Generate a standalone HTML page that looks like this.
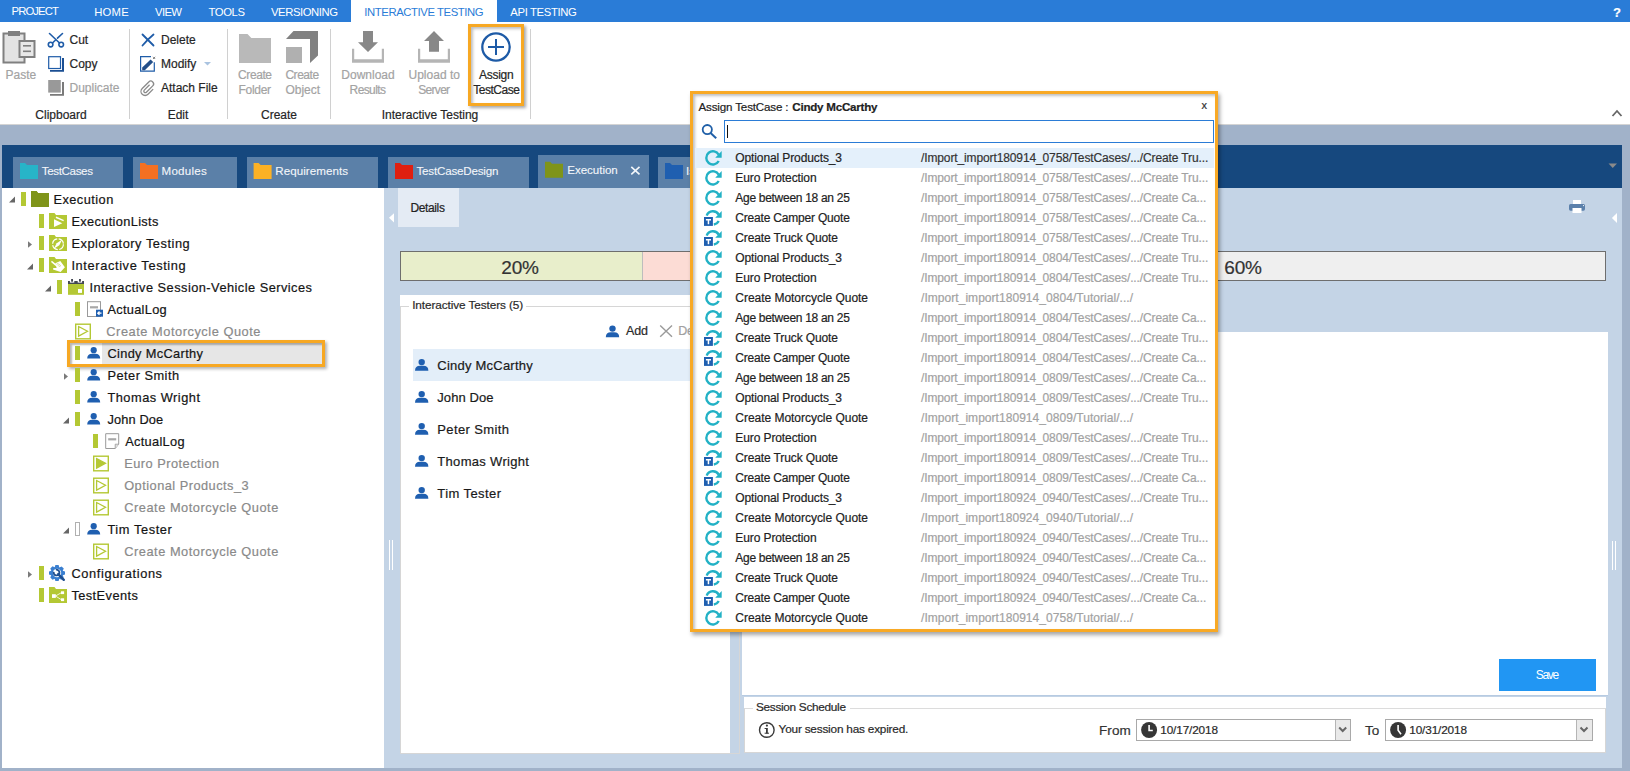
<!DOCTYPE html>
<html><head><meta charset="utf-8"><style>
*{margin:0;padding:0;box-sizing:border-box}
html,body{width:1630px;height:771px;overflow:hidden;background:#a1b2c9;font-family:"Liberation Sans",sans-serif;color:#1e1e1e}
.a{position:absolute}
.t{position:absolute;white-space:nowrap;line-height:1;-webkit-text-stroke:0.2px currentColor}
svg{position:absolute;overflow:visible}
</style></head><body>
<div class="a" style="left:0px;top:0px;width:1630px;height:22px;background:#2a7cd7"></div>
<div class="a" style="left:351px;top:0px;width:146px;height:22px;background:#fff"></div>
<div class="t" style="left:11.5px;top:6.43px;font-size:11.3px;color:#fff;letter-spacing:-0.903px;-webkit-text-stroke:0">PROJECT</div>
<div class="t" style="left:94.2px;top:7.23px;font-size:11.3px;color:#fff;letter-spacing:0.242px;-webkit-text-stroke:0">HOME</div>
<div class="t" style="left:155px;top:7.23px;font-size:11.3px;color:#fff;letter-spacing:-0.620px;-webkit-text-stroke:0">VIEW</div>
<div class="t" style="left:208.5px;top:7.23px;font-size:11.3px;color:#fff;letter-spacing:-0.395px;-webkit-text-stroke:0">TOOLS</div>
<div class="t" style="left:271px;top:7.23px;font-size:11.3px;color:#fff;letter-spacing:-0.434px;-webkit-text-stroke:0">VERSIONING</div>
<div class="t" style="left:364.3px;top:7.23px;font-size:11.3px;color:#2a7cd7;letter-spacing:-0.404px;-webkit-text-stroke:0">INTERACTIVE TESTING</div>
<div class="t" style="left:510.3px;top:7.23px;font-size:11.3px;color:#fff;letter-spacing:-0.359px;-webkit-text-stroke:0">API TESTING</div>
<div class="t" style="left:1613px;top:5.50px;font-size:13px;color:#fff;font-weight:bold">?</div>
<div class="a" style="left:0px;top:22px;width:1630px;height:103px;background:#fff"></div>
<div class="a" style="left:0px;top:124px;width:1630px;height:1px;background:#d4d4d4"></div>
<svg style="left:0;top:0" width="1630" height="771" viewBox="0 0 1630 771"><rect x="3.5" y="33.5" width="21" height="29" fill="#e3e3e3" stroke="#808080" stroke-width="2"/>
<rect x="8" y="31" width="12" height="5" fill="#808080"/>
<rect x="19.5" y="41" width="15" height="16" fill="#e8e8e8" stroke="#808080" stroke-width="2"/>
<rect x="23" y="45" width="8" height="1.6" fill="#808080"/><rect x="23" y="50.5" width="8" height="1.6" fill="#808080"/></svg>
<div class="t" style="left:5.5px;top:68.84px;font-size:12px;color:#a3a3a3;">Paste</div>
<svg style="left:0;top:0" width="1630" height="771" viewBox="0 0 1630 771"><g stroke="#1f5ca8" stroke-width="1.6" fill="none" stroke-linecap="round">
<line x1="49.5" y1="33.5" x2="59" y2="42.5"/><line x1="62.5" y1="33.5" x2="57.5" y2="38.2"/><line x1="55.3" y1="40.2" x2="53" y2="42.5"/>
<circle cx="50.6" cy="44.6" r="2.3"/><circle cx="61.2" cy="44.6" r="2.3"/></g></svg>
<div class="t" style="left:69.5px;top:33.84px;font-size:12px;color:#262626;">Cut</div>
<svg style="left:0;top:0" width="1630" height="771" viewBox="0 0 1630 771"><rect x="48.7" y="56.7" width="11.8" height="11.8" fill="none" stroke="#1f5ca8" stroke-width="1.2"/>
<path d="M62 58 H64 V71.8 H50 V70 H62 Z" fill="#1b4f93"/></svg>
<div class="t" style="left:69.5px;top:57.84px;font-size:12px;color:#262626;">Copy</div>
<svg style="left:0;top:0" width="1630" height="771" viewBox="0 0 1630 771"><rect x="48.2" y="80" width="12.6" height="12.6" fill="#999"/>
<path d="M62 82 H64 V95.8 H50 V94 H62 Z" fill="#7a7a7a"/></svg>
<div class="t" style="left:69.5px;top:81.84px;font-size:12px;color:#a3a3a3;">Duplicate</div>
<div class="a" style="left:129px;top:29px;width:1px;height:90px;background:#d0d0d0"></div>
<svg style="left:0;top:0" width="1630" height="771" viewBox="0 0 1630 771"><g stroke="#1f5ca8" stroke-width="1.8" fill="none" stroke-linecap="round">
<path d="M142.5 34.5 Q147 39 153.5 45.5"/><path d="M153.5 34.5 Q148 39 142.5 45.5"/></g></svg>
<div class="t" style="left:161px;top:33.84px;font-size:12px;color:#262626;">Delete</div>
<svg style="left:0;top:0" width="1630" height="771" viewBox="0 0 1630 771"><path d="M151 56.7 H140.6 V71.2 H154.3 V62.2" fill="none" stroke="#1f5ca8" stroke-width="1.2"/>
<path d="M142.2 67.6 L150.6 59.4 L153.2 62 L144.8 70.2 L142.2 70.2 Z" fill="#234e88"/>
<path d="M153 56.8 L155.2 59 M155.2 56.8 L153 59" stroke="#777" stroke-width="0.9"/></svg>
<div class="t" style="left:161px;top:57.84px;font-size:12px;color:#262626;">Modify</div>
<svg style="left:0;top:0" width="1630" height="771" viewBox="0 0 1630 771"><path d="M204 62 H211 L207.5 65.5 Z" fill="#aac3e0"/></svg>
<svg style="left:0;top:0" width="1630" height="771" viewBox="0 0 1630 771"><g transform="translate(148.5,88) rotate(45)"><path d="M-1.5 -3 V4.5 A1.5 1.5 0 0 0 1.5 4.5 V-4.5 A2.8 2.8 0 0 0 -4.1 -4.5 V4.8 A4.1 4.1 0 0 0 4.1 4.8 V-2.5" fill="none" stroke="#8a8a8a" stroke-width="1.3"/></g></svg>
<div class="t" style="left:161px;top:81.84px;font-size:12px;color:#262626;">Attach File</div>
<div class="a" style="left:227px;top:29px;width:1px;height:90px;background:#d0d0d0"></div>
<svg style="left:0;top:0" width="1630" height="771" viewBox="0 0 1630 771"><path d="M239 34 H247.5 L251.3 38 H271 V63 H239 Z" fill="#b9b9b9"/></svg>
<div class="t" style="left:238.1px;top:68.84px;font-size:12px;color:#a3a3a3;letter-spacing:-0.423px;">Create</div>
<div class="t" style="left:238.6px;top:84.14px;font-size:12px;color:#a3a3a3;letter-spacing:-0.323px;">Folder</div>
<svg style="left:0;top:0" width="1630" height="771" viewBox="0 0 1630 771"><path d="M293.5 31 H318 V55.4 L310 63 V39 H286 Z" fill="#818181"/><rect x="286" y="47" width="16" height="16" fill="#b0b0b0"/></svg>
<div class="t" style="left:285.4px;top:68.84px;font-size:12px;color:#a3a3a3;letter-spacing:-0.463px;">Create</div>
<div class="t" style="left:285.4px;top:84.14px;font-size:12px;color:#a3a3a3;letter-spacing:0.006px;">Object</div>
<div class="a" style="left:330px;top:29px;width:1px;height:90px;background:#d0d0d0"></div>
<svg style="left:0;top:0" width="1630" height="771" viewBox="0 0 1630 771"><path d="M363 31 H373 V42.2 H378 L368 52 L358 42.2 H363 Z" fill="#888"/>
<path d="M352 48.8 H354.2 V59.2 H381.8 V48.8 H384 V62.8 H352 Z" fill="#b5b5b5"/></svg>
<div class="t" style="left:341.3px;top:68.84px;font-size:12px;color:#a3a3a3;letter-spacing:0.004px;">Download</div>
<div class="t" style="left:349.6px;top:84.14px;font-size:12px;color:#a3a3a3;letter-spacing:-0.619px;">Results</div>
<svg style="left:0;top:0" width="1630" height="771" viewBox="0 0 1630 771"><path d="M434 31 L444 41 H439 V51.8 H429 V41 H424 Z" fill="#888"/>
<path d="M418 48.8 H420.2 V59.2 H447.8 V48.8 H450 V62.8 H418 Z" fill="#b5b5b5"/></svg>
<div class="t" style="left:408.5px;top:68.84px;font-size:12px;color:#a3a3a3;letter-spacing:0.005px;">Upload to</div>
<div class="t" style="left:418.3px;top:84.14px;font-size:12px;color:#a3a3a3;letter-spacing:-0.709px;">Server</div>
<div class="a" style="left:468.3px;top:24.3px;width:55.7px;height:81.5px;border:3px solid #f7a823;box-shadow:2px 2px 3px rgba(0,0,0,.35), inset 2px 2px 3px rgba(0,0,0,.25)"></div>
<svg style="left:0;top:0" width="1630" height="771" viewBox="0 0 1630 771"><circle cx="496" cy="47" r="13.7" fill="none" stroke="#1d5aa6" stroke-width="2.3"/>
<rect x="488" y="46" width="16" height="2" fill="#1d5aa6"/><rect x="495" y="39" width="2" height="16" fill="#1d5aa6"/></svg>
<div class="t" style="left:479.1px;top:68.84px;font-size:12px;color:#262626;letter-spacing:-0.303px;">Assign</div>
<div class="t" style="left:473.2px;top:84.14px;font-size:12px;color:#262626;letter-spacing:-0.474px;">TestCase</div>
<div class="a" style="left:530px;top:29px;width:1px;height:90px;background:#d0d0d0"></div>
<div class="t" style="left:-139px;width:400px;text-align:center;top:109.14px;font-size:12px;color:#262626;">Clipboard</div>
<div class="t" style="left:-22px;width:400px;text-align:center;top:109.14px;font-size:12px;color:#262626;">Edit</div>
<div class="t" style="left:79px;width:400px;text-align:center;top:109.14px;font-size:12px;color:#262626;">Create</div>
<div class="t" style="left:230px;width:400px;text-align:center;top:109.14px;font-size:12px;color:#262626;">Interactive Testing</div>
<svg style="left:0;top:0" width="1630" height="771" viewBox="0 0 1630 771"><path d="M1612.5 116 L1617 111 L1621.5 116" fill="none" stroke="#666" stroke-width="1.8"/></svg>
<div class="a" style="left:2px;top:145px;width:1620px;height:43px;background:#16487e"></div>
<div class="a" style="left:2px;top:188px;width:382px;height:580px;background:#fff"></div>
<div class="a" style="left:384px;top:188px;width:1238px;height:580px;background:#c4d4e6"></div>
<div class="a" style="left:13px;top:157px;width:110px;height:31px;background:#5b80a8"></div>
<svg style="left:0;top:0" width="1630" height="771" viewBox="0 0 1630 771"><path d="M20 163 H25 L27 165 H38 V179 H20 Z" fill="#27b4c8"/></svg>
<div class="t" style="left:41.8px;top:165.48px;font-size:11.6px;color:#f3f6fa;letter-spacing:-0.368px;-webkit-text-stroke:0.1px currentColor">TestCases</div>
<div class="a" style="left:133px;top:157px;width:104px;height:31px;background:#5b80a8"></div>
<svg style="left:0;top:0" width="1630" height="771" viewBox="0 0 1630 771"><path d="M140 163 H145 L147 165 H158 V179 H140 Z" fill="#f37022"/></svg>
<div class="t" style="left:161.5px;top:165.48px;font-size:11.6px;color:#f3f6fa;letter-spacing:0.259px;-webkit-text-stroke:0.1px currentColor">Modules</div>
<div class="a" style="left:246.6px;top:157px;width:131.4px;height:31px;background:#5b80a8"></div>
<svg style="left:0;top:0" width="1630" height="771" viewBox="0 0 1630 771"><path d="M253.6 163 H258.6 L260.6 165 H271.6 V179 H253.6 Z" fill="#fcb125"/></svg>
<div class="t" style="left:275.3px;top:165.48px;font-size:11.6px;color:#f3f6fa;letter-spacing:0.045px;-webkit-text-stroke:0.1px currentColor">Requirements</div>
<div class="a" style="left:388px;top:157px;width:140.70000000000005px;height:31px;background:#5b80a8"></div>
<svg style="left:0;top:0" width="1630" height="771" viewBox="0 0 1630 771"><path d="M395 163 H400 L402 165 H413 V179 H395 Z" fill="#df1f10"/></svg>
<div class="t" style="left:416.5px;top:165.48px;font-size:11.6px;color:#f3f6fa;letter-spacing:-0.189px;-webkit-text-stroke:0.1px currentColor">TestCaseDesign</div>
<div class="a" style="left:538px;top:154.8px;width:111px;height:33.19999999999999px;background:#5b80a8"></div>
<svg style="left:0;top:0" width="1630" height="771" viewBox="0 0 1630 771"><path d="M545 161.8 H550 L552 163.8 H563 V177.8 H545 Z" fill="#7f9419"/></svg>
<div class="t" style="left:567.3px;top:164.48px;font-size:11.6px;color:#f3f6fa;letter-spacing:-0.055px;-webkit-text-stroke:0.1px currentColor">Execution</div>
<div class="a" style="left:658px;top:157px;width:102px;height:31px;background:#5b80a8"></div>
<svg style="left:0;top:0" width="1630" height="771" viewBox="0 0 1630 771"><path d="M665 163 H670 L672 165 H683 V179 H665 Z" fill="#1f5fb0"/></svg>
<div class="t" style="left:686px;top:165.48px;font-size:11.6px;color:#f3f6fa;letter-spacing:0.097px;-webkit-text-stroke:0.1px currentColor">Issues</div>
<svg style="left:0;top:0" width="1630" height="771" viewBox="0 0 1630 771"><path d="M631.3 166.8 L639.5 174.3 M639.5 166.8 L631.3 174.3" stroke="#f3f6fa" stroke-width="1.6"/></svg>
<svg style="left:0;top:0" width="1630" height="771" viewBox="0 0 1630 771"><path d="M1608.5 163.5 H1617 L1612.75 168 Z" fill="#8a8a8a"/></svg>
<svg style="left:0;top:0" width="1630" height="771" viewBox="0 0 1630 771"><path d="M9 202.5 H15 V196.5 Z" fill="#666"/></svg>
<div class="a" style="left:21px;top:192px;width:5px;height:14px;background:#b4c834"></div>
<svg style="left:0;top:0" width="1630" height="771" viewBox="0 0 1630 771"><path d="M31 191 H36.5 L38 193 H49 V207 H31 Z" fill="#7f9419"/></svg>
<svg style="left:0;top:0" width="1630" height="771" viewBox="0 0 1630 771"><path d="M31 191 H36.5 L38 193 H49 V207 H31 Z" fill="#7f9419"/></svg>
<div class="t" style="left:53.4px;top:194.16px;font-size:12.8px;color:#141414;letter-spacing:0.464px;">Execution</div>
<div class="a" style="left:39px;top:214px;width:5px;height:14px;background:#b4c834"></div>
<svg style="left:0;top:0" width="1630" height="771" viewBox="0 0 1630 771"><path d="M49 213 H54.5 L56 215 H67 V229 H49 Z" fill="#b4c834"/></svg>
<svg style="left:0;top:0" width="1630" height="771" viewBox="0 0 1630 771"><path d="M54 219.3 L62.3 223.2 L54 227 Z" fill="#fff"/><path d="M56.2 216.6 L63.9 220 L63.4 221.2 L55.7 217.9 Z" fill="#fff"/></svg>
<div class="t" style="left:71.4px;top:216.16px;font-size:12.8px;color:#141414;letter-spacing:0.345px;">ExecutionLists</div>
<svg style="left:0;top:0" width="1630" height="771" viewBox="0 0 1630 771"><path d="M28 241.3 L32 244.5 L28 247.7 Z" fill="#7a7a7a"/></svg>
<div class="a" style="left:39px;top:236px;width:5px;height:14px;background:#b4c834"></div>
<svg style="left:0;top:0" width="1630" height="771" viewBox="0 0 1630 771"><path d="M49 235 H54.5 L56 237 H67 V251 H49 Z" fill="#b4c834"/></svg>
<svg style="left:0;top:0" width="1630" height="771" viewBox="0 0 1630 771"><circle cx="58" cy="244.2" r="5.4" fill="none" stroke="#fff" stroke-width="1.2" stroke-dasharray="7 1.5"/><path d="M62.2 239.6 L59.3 245.2 L53.8 248.8 L56.7 243.2 Z" fill="#fff"/></svg>
<div class="t" style="left:71.4px;top:238.16px;font-size:12.8px;color:#141414;letter-spacing:0.540px;">Exploratory Testing</div>
<svg style="left:0;top:0" width="1630" height="771" viewBox="0 0 1630 771"><path d="M27 269.5 H33 V263.5 Z" fill="#666"/></svg>
<div class="a" style="left:39px;top:258px;width:5px;height:14px;background:#b4c834"></div>
<svg style="left:0;top:0" width="1630" height="771" viewBox="0 0 1630 771"><path d="M49 257 H54.5 L56 259 H67 V273 H49 Z" fill="#b4c834"/></svg>
<svg style="left:0;top:0" width="1630" height="771" viewBox="0 0 1630 771"><path d="M51 261.9 L51.9 260.7 L57.4 265.3 L56.4 266.6 Z" fill="#fff"/><path d="M55.3 263.3 L60.3 260.9 L64.9 267.3 L60.6 272 L53 269.4 L53.3 268.1 L56.6 268 L56 265.6 Z" fill="#fff"/><path d="M56.6 264.2 L58.5 263.4 M57.8 265.4 L59.8 264.4 M58.8 266.6 L61 265.5" stroke="#b4c834" stroke-width="0.6"/></svg>
<div class="t" style="left:71.4px;top:260.16px;font-size:12.8px;color:#141414;letter-spacing:0.633px;">Interactive Testing</div>
<svg style="left:0;top:0" width="1630" height="771" viewBox="0 0 1630 771"><path d="M45 291.5 H51 V285.5 Z" fill="#666"/></svg>
<div class="a" style="left:57px;top:280px;width:5px;height:14px;background:#b4c834"></div>
<svg style="left:0;top:0" width="1630" height="771" viewBox="0 0 1630 771"><rect x="68" y="283.8" width="16" height="11" fill="#b4c834"/><rect x="68" y="282.6" width="16" height="1.4" fill="#434853"/><rect x="68" y="281" width="1.9" height="2" fill="#434853"/><rect x="74.3" y="281" width="3.4" height="2" fill="#434853"/><rect x="82.1" y="281" width="1.9" height="2" fill="#434853"/><rect x="71.1" y="279" width="1.9" height="2.7" fill="#434853"/><rect x="79" y="279" width="1.9" height="2.7" fill="#434853"/><rect x="78" y="289" width="4" height="3.9" fill="#fff"/></svg>
<div class="t" style="left:89.4px;top:282.16px;font-size:12.8px;color:#141414;letter-spacing:0.466px;">Interactive Session-Vehicle Services</div>
<div class="a" style="left:75px;top:302px;width:5px;height:14px;background:#b4c834"></div>
<svg style="left:0;top:0" width="1630" height="771" viewBox="0 0 1630 771"><rect x="87.5" y="301.7" width="13" height="14.8" fill="#fff" stroke="#9a9a9a" stroke-width="1"/><rect x="90" y="306.2" width="8" height="2.2" fill="#a8a8a8"/><rect x="96" y="309.7" width="7" height="7" fill="#1f5fb0"/><path d="M101.5 313.2 H98 M99.5 311.5 L97.8 313.2 L99.5 314.9" stroke="#fff" stroke-width="1.3" fill="none"/></svg>
<div class="t" style="left:107.4px;top:304.16px;font-size:12.8px;color:#141414;letter-spacing:0.301px;">ActualLog</div>
<svg style="left:0;top:0" width="1630" height="771" viewBox="0 0 1630 771"><rect x="75.7" y="324.2" width="14.6" height="14.6" fill="none" stroke="#b4c834" stroke-width="1.4"/><path d="M78.6 326.5 L87.5 331.3 L78.6 336.1 Z" fill="none" stroke="#b4c834" stroke-width="1.3" stroke-linejoin="miter"/></svg>
<div class="t" style="left:106.3px;top:326.16px;font-size:12.8px;color:#8a8a8a;letter-spacing:0.539px;">Create Motorcycle Quote</div>
<div class="a" style="left:67.1px;top:340px;width:258.2px;height:26.8px;border:3px solid #f7a823;box-shadow:2px 2px 3px rgba(0,0,0,.3), inset 2px 2px 2px rgba(0,0,0,.28);background:linear-gradient(to right,#fff 32px,#e6e6e6 32px)"></div>
<div class="a" style="left:75px;top:346px;width:5px;height:14px;background:#b4c834"></div>
<svg style="left:0;top:0" width="1630" height="771" viewBox="0 0 1630 771"><g transform="translate(87.2,353) scale(1.0)"><circle cx="6.5" cy="-2.8" r="3.1" fill="#1f5fb0"/><path d="M0 5.6 Q0 0.8 5 0.8 H8 Q13 0.8 13 5.6 Z" fill="#1f5fb0"/></g></svg>
<div class="t" style="left:107.4px;top:348.16px;font-size:12.8px;color:#141414;letter-spacing:0.345px;">Cindy McCarthy</div>
<svg style="left:0;top:0" width="1630" height="771" viewBox="0 0 1630 771"><path d="M64 373.3 L68 376.5 L64 379.7 Z" fill="#7a7a7a"/></svg>
<div class="a" style="left:75px;top:368px;width:5px;height:14px;background:#b4c834"></div>
<svg style="left:0;top:0" width="1630" height="771" viewBox="0 0 1630 771"><g transform="translate(87.2,375) scale(1.0)"><circle cx="6.5" cy="-2.8" r="3.1" fill="#1f5fb0"/><path d="M0 5.6 Q0 0.8 5 0.8 H8 Q13 0.8 13 5.6 Z" fill="#1f5fb0"/></g></svg>
<div class="t" style="left:107.4px;top:370.16px;font-size:12.8px;color:#141414;letter-spacing:0.486px;">Peter Smith</div>
<div class="a" style="left:75px;top:390px;width:5px;height:14px;background:#b4c834"></div>
<svg style="left:0;top:0" width="1630" height="771" viewBox="0 0 1630 771"><g transform="translate(87.2,397) scale(1.0)"><circle cx="6.5" cy="-2.8" r="3.1" fill="#1f5fb0"/><path d="M0 5.6 Q0 0.8 5 0.8 H8 Q13 0.8 13 5.6 Z" fill="#1f5fb0"/></g></svg>
<div class="t" style="left:107.4px;top:392.16px;font-size:12.8px;color:#141414;letter-spacing:0.508px;">Thomas Wright</div>
<svg style="left:0;top:0" width="1630" height="771" viewBox="0 0 1630 771"><path d="M63 423.5 H69 V417.5 Z" fill="#666"/></svg>
<div class="a" style="left:75px;top:412px;width:5px;height:14px;background:#b4c834"></div>
<svg style="left:0;top:0" width="1630" height="771" viewBox="0 0 1630 771"><g transform="translate(87.2,419) scale(1.0)"><circle cx="6.5" cy="-2.8" r="3.1" fill="#1f5fb0"/><path d="M0 5.6 Q0 0.8 5 0.8 H8 Q13 0.8 13 5.6 Z" fill="#1f5fb0"/></g></svg>
<div class="t" style="left:107.4px;top:414.16px;font-size:12.8px;color:#141414;letter-spacing:0.150px;">John Doe</div>
<div class="a" style="left:93.3px;top:434px;width:5px;height:14px;background:#b4c834"></div>
<svg style="left:0;top:0" width="1630" height="771" viewBox="0 0 1630 771"><path d="M105.7 433.7 H118.7 V444.2 L115.2 448.5 H105.7 Z" fill="#fff" stroke="#9a9a9a" stroke-width="1"/><path d="M118.7 444.2 H115.2 V448.5" fill="#e0e0e0" stroke="#9a9a9a" stroke-width="0.8"/><rect x="108.2" y="438.2" width="8" height="2.2" fill="#a8a8a8"/></svg>
<div class="t" style="left:125.2px;top:436.16px;font-size:12.8px;color:#141414;letter-spacing:0.301px;">ActualLog</div>
<svg style="left:0;top:0" width="1630" height="771" viewBox="0 0 1630 771"><rect x="93.7" y="456.2" width="14.6" height="14.6" fill="none" stroke="#b4c834" stroke-width="1.4"/><path d="M96.6 458.5 L105.5 463.3 L96.6 468.1 Z" fill="#b4c834" stroke="#b4c834" stroke-width="1.3" stroke-linejoin="miter"/></svg>
<div class="t" style="left:124.2px;top:458.16px;font-size:12.8px;color:#8a8a8a;letter-spacing:0.479px;">Euro Protection</div>
<svg style="left:0;top:0" width="1630" height="771" viewBox="0 0 1630 771"><rect x="93.7" y="478.2" width="14.6" height="14.6" fill="none" stroke="#b4c834" stroke-width="1.4"/><path d="M96.6 480.5 L105.5 485.3 L96.6 490.1 Z" fill="none" stroke="#b4c834" stroke-width="1.3" stroke-linejoin="miter"/></svg>
<div class="t" style="left:124.2px;top:480.16px;font-size:12.8px;color:#8a8a8a;letter-spacing:0.471px;">Optional Products_3</div>
<svg style="left:0;top:0" width="1630" height="771" viewBox="0 0 1630 771"><rect x="93.7" y="500.2" width="14.6" height="14.6" fill="none" stroke="#b4c834" stroke-width="1.4"/><path d="M96.6 502.5 L105.5 507.3 L96.6 512.1 Z" fill="none" stroke="#b4c834" stroke-width="1.3" stroke-linejoin="miter"/></svg>
<div class="t" style="left:124.2px;top:502.16px;font-size:12.8px;color:#8a8a8a;letter-spacing:0.539px;">Create Motorcycle Quote</div>
<svg style="left:0;top:0" width="1630" height="771" viewBox="0 0 1630 771"><path d="M63 533.5 H69 V527.5 Z" fill="#666"/></svg>
<svg style="left:0;top:0" width="1630" height="771" viewBox="0 0 1630 771"><rect x="75.5" y="522.5" width="4" height="13" fill="none" stroke="#b0b0b0" stroke-width="1"/></svg>
<svg style="left:0;top:0" width="1630" height="771" viewBox="0 0 1630 771"><g transform="translate(87.2,529) scale(1.0)"><circle cx="6.5" cy="-2.8" r="3.1" fill="#1f5fb0"/><path d="M0 5.6 Q0 0.8 5 0.8 H8 Q13 0.8 13 5.6 Z" fill="#1f5fb0"/></g></svg>
<div class="t" style="left:107.4px;top:524.16px;font-size:12.8px;color:#141414;letter-spacing:0.598px;">Tim Tester</div>
<svg style="left:0;top:0" width="1630" height="771" viewBox="0 0 1630 771"><rect x="93.7" y="544.2" width="14.6" height="14.6" fill="none" stroke="#b4c834" stroke-width="1.4"/><path d="M96.6 546.5 L105.5 551.3 L96.6 556.1 Z" fill="none" stroke="#b4c834" stroke-width="1.3" stroke-linejoin="miter"/></svg>
<div class="t" style="left:124.2px;top:546.16px;font-size:12.8px;color:#8a8a8a;letter-spacing:0.539px;">Create Motorcycle Quote</div>
<svg style="left:0;top:0" width="1630" height="771" viewBox="0 0 1630 771"><path d="M28 571.3 L32 574.5 L28 577.7 Z" fill="#7a7a7a"/></svg>
<div class="a" style="left:39px;top:566px;width:5px;height:14px;background:#b4c834"></div>
<svg style="left:0;top:0" width="1630" height="771" viewBox="0 0 1630 771"><g transform="translate(57,573)"><path d="M-1.6 -7.9 H1.6 L2.3 -5.6 L4.6 -6.6 L6.8 -4.4 L5.7 -2.2 L8 -1.5 V1.6 L5.7 2.3 L6.7 4.5 L4.5 6.7 L2.3 5.7 L1.6 8 H-1.6 L-2.3 5.7 L-4.5 6.7 L-6.7 4.5 L-5.7 2.3 L-8 1.6 V-1.6 L-5.7 -2.3 L-6.7 -4.5 L-4.5 -6.7 L-2.3 -5.7 Z" fill="#3a7fd0"/><circle cx="0" cy="0" r="4.2" fill="#fff"/><path d="M-3.3 -1.2 A2.9 2.9 0 1 0 -1.2 -3.3" fill="none" stroke="#1f4f8f" stroke-width="1.9"/><path d="M1.2 1.2 L6.8 6.8" stroke="#1f4f8f" stroke-width="2.4" stroke-linecap="round"/></g></svg>
<div class="t" style="left:71.4px;top:568.16px;font-size:12.8px;color:#141414;letter-spacing:0.624px;">Configurations</div>
<div class="a" style="left:39px;top:588px;width:5px;height:14px;background:#b4c834"></div>
<svg style="left:0;top:0" width="1630" height="771" viewBox="0 0 1630 771"><path d="M49 587 H54.5 L56 589 H67 V603 H49 Z" fill="#b4c834"/></svg>
<svg style="left:0;top:0" width="1630" height="771" viewBox="0 0 1630 771"><rect x="52" y="594.2" width="3.8" height="3.7" fill="#fff"/><rect x="61" y="591.3" width="3.1" height="2.8" fill="#fff"/><rect x="61" y="598.3" width="3.1" height="2.8" fill="#fff"/><path d="M55.5 596 L61.2 592.8 M55.5 596 L61.2 599.6" stroke="#fff" stroke-width="0.8"/></svg>
<div class="t" style="left:71.4px;top:590.16px;font-size:12.8px;color:#141414;letter-spacing:0.434px;">TestEvents</div>
<div class="a" style="left:389px;top:540px;width:1px;height:30px;background:#fff"></div>
<div class="a" style="left:392px;top:540px;width:1px;height:30px;background:#fff"></div>
<svg style="left:0;top:0" width="1630" height="771" viewBox="0 0 1630 771"><path d="M389 217.8 L394 213.2 V222.6 Z" fill="#fff"/></svg>
<div class="a" style="left:398px;top:188px;width:61px;height:38.8px;background:#e4ebf4"></div>
<div class="t" style="left:410.5px;top:201.84px;font-size:12px;color:#222;letter-spacing:-0.381px;">Details</div>
<svg style="left:0;top:0" width="1630" height="771" viewBox="0 0 1630 771"><rect x="1573" y="200" width="8" height="4" fill="#fff"/><rect x="1569" y="204" width="16" height="6.7" rx="1.6" fill="#5b80ab"/><rect x="1572.5" y="208" width="9" height="5" fill="#fff"/><circle cx="1583.5" cy="205.6" r="0.6" fill="#fff"/></svg>
<svg style="left:0;top:0" width="1630" height="771" viewBox="0 0 1630 771"><path d="M1611.9 218 L1617 213.1 V223 Z" fill="#fff"/></svg>
<div class="a" style="left:400px;top:251.2px;width:1206px;height:29.4px;border:1px solid #6e6e6e;background:#efefef"></div>
<div class="a" style="left:401px;top:252.2px;width:240.5px;height:27.4px;background:#e8eecb"></div>
<div class="a" style="left:641.5px;top:252.2px;width:240.5px;height:27.4px;background:#fcdcd5;border-left:1px solid #bdbdbd"></div>
<div class="t" style="left:320px;width:400px;text-align:center;top:257.62px;font-size:19px;color:#333;letter-spacing:-0.2px">20%</div>
<div class="t" style="left:562px;width:400px;text-align:center;top:257.62px;font-size:19px;color:#333;letter-spacing:-0.2px">20%</div>
<div class="t" style="left:1043px;width:400px;text-align:center;top:257.62px;font-size:19px;color:#333;letter-spacing:-0.2px">60%</div>
<div class="a" style="left:400px;top:294.6px;width:330px;height:458.6px;background:#fff"></div>
<div class="a" style="left:400px;top:306px;width:340px;height:448px;border:1px solid #d6d6d6"></div>
<div class="a" style="left:409px;top:300px;width:117px;height:12px;background:#fff"></div>
<div class="t" style="left:412.2px;top:300.01px;font-size:11.8px;color:#2a2a2a;letter-spacing:-0.102px;">Interactive Testers (5)</div>
<svg style="left:0;top:0" width="1630" height="771" viewBox="0 0 1630 771"><g transform="translate(605.8,331.5) scale(1.03)"><circle cx="6.5" cy="-2.8" r="3.1" fill="#1f5fb0"/><path d="M0 5.6 Q0 0.8 5 0.8 H8 Q13 0.8 13 5.6 Z" fill="#1f5fb0"/></g></svg>
<div class="t" style="left:626px;top:325.42px;font-size:12.5px;color:#2a2a2a;letter-spacing:-0.2px">Add</div>
<svg style="left:0;top:0" width="1630" height="771" viewBox="0 0 1630 771"><path d="M660.2 325.5 L672 336.8 M672 325.5 L660.2 336.8" stroke="#9a9a9a" stroke-width="1.4"/></svg>
<div class="t" style="left:678.2px;top:325.42px;font-size:12.5px;color:#a0a0a0;letter-spacing:-0.2px">Delete</div>
<div class="a" style="left:412.8px;top:348.8px;width:317.2px;height:32.2px;background:#e3eef9"></div>
<svg style="left:0;top:0" width="1630" height="771" viewBox="0 0 1630 771"><g transform="translate(415,365) scale(1.03)"><circle cx="6.5" cy="-2.8" r="3.1" fill="#1f5fb0"/><path d="M0 5.6 Q0 0.8 5 0.8 H8 Q13 0.8 13 5.6 Z" fill="#1f5fb0"/></g></svg>
<div class="t" style="left:437.3px;top:358.50px;font-size:13px;color:#1a1a1a;letter-spacing:0.224px;">Cindy McCarthy</div>
<svg style="left:0;top:0" width="1630" height="771" viewBox="0 0 1630 771"><g transform="translate(415,397) scale(1.03)"><circle cx="6.5" cy="-2.8" r="3.1" fill="#1f5fb0"/><path d="M0 5.6 Q0 0.8 5 0.8 H8 Q13 0.8 13 5.6 Z" fill="#1f5fb0"/></g></svg>
<div class="t" style="left:437.3px;top:390.50px;font-size:13px;color:#1a1a1a;letter-spacing:0.075px;">John Doe</div>
<svg style="left:0;top:0" width="1630" height="771" viewBox="0 0 1630 771"><g transform="translate(415,429) scale(1.03)"><circle cx="6.5" cy="-2.8" r="3.1" fill="#1f5fb0"/><path d="M0 5.6 Q0 0.8 5 0.8 H8 Q13 0.8 13 5.6 Z" fill="#1f5fb0"/></g></svg>
<div class="t" style="left:437.3px;top:422.50px;font-size:13px;color:#1a1a1a;letter-spacing:0.378px;">Peter Smith</div>
<svg style="left:0;top:0" width="1630" height="771" viewBox="0 0 1630 771"><g transform="translate(415,461) scale(1.03)"><circle cx="6.5" cy="-2.8" r="3.1" fill="#1f5fb0"/><path d="M0 5.6 Q0 0.8 5 0.8 H8 Q13 0.8 13 5.6 Z" fill="#1f5fb0"/></g></svg>
<div class="t" style="left:437.3px;top:454.50px;font-size:13px;color:#1a1a1a;letter-spacing:0.316px;">Thomas Wright</div>
<svg style="left:0;top:0" width="1630" height="771" viewBox="0 0 1630 771"><g transform="translate(415,493) scale(1.03)"><circle cx="6.5" cy="-2.8" r="3.1" fill="#1f5fb0"/><path d="M0 5.6 Q0 0.8 5 0.8 H8 Q13 0.8 13 5.6 Z" fill="#1f5fb0"/></g></svg>
<div class="t" style="left:437.3px;top:486.50px;font-size:13px;color:#1a1a1a;letter-spacing:0.416px;">Tim Tester</div>
<div class="a" style="left:742px;top:332px;width:866px;height:363px;background:#fff"></div>
<div class="a" style="left:742px;top:694.8px;width:866px;height:1px;background:#b7cbe2"></div>
<div class="a" style="left:1499px;top:659px;width:96.5px;height:31.6px;background:#2196f3"></div>
<div class="t" style="left:1535.7px;top:668.84px;font-size:12px;color:#fff;letter-spacing:-1.281px;-webkit-text-stroke:0">Save</div>
<div class="a" style="left:744.2px;top:697.3px;width:861.8px;height:55.8px;background:#fff"></div>
<div class="a" style="left:744px;top:708px;width:861.6px;height:45.3px;border:1px solid #d6d6d6;border-top-color:#dcdcdc"></div>
<div class="a" style="left:752.5px;top:701px;width:97px;height:12px;background:#fff"></div>
<div class="t" style="left:756px;top:702.01px;font-size:11.8px;color:#2a2a2a;letter-spacing:-0.300px;">Session Schedule</div>
<svg style="left:0;top:0" width="1630" height="771" viewBox="0 0 1630 771"><circle cx="766.8" cy="730" r="7.3" fill="none" stroke="#3a3a3a" stroke-width="1.4"/><rect x="766" y="728" width="1.8" height="5.5" fill="#3a3a3a"/><circle cx="766.9" cy="725.6" r="1.1" fill="#3a3a3a"/><rect x="764.6" y="732.7" width="4.4" height="1" fill="#3a3a3a"/><rect x="764.6" y="728" width="2.5" height="1" fill="#3a3a3a"/></svg>
<div class="t" style="left:778.6px;top:724.01px;font-size:11.8px;color:#2a2a2a;letter-spacing:-0.206px;">Your session has expired.</div>
<div class="t" style="left:1099px;top:723.57px;font-size:13.5px;color:#333;letter-spacing:0.1px">From</div>
<div class="t" style="left:1365px;top:723.57px;font-size:13.5px;color:#333;letter-spacing:0.1px">To</div>
<div class="a" style="left:1136.3px;top:719.3px;width:214.29999999999995px;height:22px;border:1px solid #a9a9a9;background:#fff"></div>
<div class="a" style="left:1334.7px;top:720.3px;width:14.899999999999864px;height:20px;background:#e9e9e9;border-left:1px solid #b5b5b5"></div>
<svg style="left:0;top:0" width="1630" height="771" viewBox="0 0 1630 771"><path d="M1339.2 727.5 L1342.7 731 L1346.2 727.5" fill="none" stroke="#666" stroke-width="2"/></svg>
<svg style="left:0;top:0" width="1630" height="771" viewBox="0 0 1630 771"><circle cx="1149.1" cy="730" r="8" fill="#363636"/><path d="M1149.1 725 V730.5 H1152.8" fill="none" stroke="#fff" stroke-width="1.6"/></svg>
<div class="t" style="left:1160.3px;top:725.01px;font-size:11.8px;color:#2a2a2a;letter-spacing:-0.15px">10/17/2018</div>
<div class="a" style="left:1385.3px;top:719.3px;width:207.5px;height:22px;border:1px solid #a9a9a9;background:#fff"></div>
<div class="a" style="left:1576px;top:720.3px;width:15.799999999999955px;height:20px;background:#e9e9e9;border-left:1px solid #b5b5b5"></div>
<svg style="left:0;top:0" width="1630" height="771" viewBox="0 0 1630 771"><path d="M1580.5 727.5 L1584 731 L1587.5 727.5" fill="none" stroke="#666" stroke-width="2"/></svg>
<svg style="left:0;top:0" width="1630" height="771" viewBox="0 0 1630 771"><circle cx="1398.1" cy="730" r="8" fill="#363636"/><path d="M1398.1 725 V730.3 L1401 734.2" fill="none" stroke="#fff" stroke-width="1.6"/></svg>
<div class="t" style="left:1409.3px;top:725.01px;font-size:11.8px;color:#2a2a2a;letter-spacing:-0.15px">10/31/2018</div>
<div class="a" style="left:1612px;top:540.5px;width:1px;height:29px;background:#fff"></div>
<div class="a" style="left:1615px;top:540.5px;width:1px;height:29px;background:#fff"></div>
<div class="a" style="left:690.2px;top:91.2px;width:528px;height:541.3px;background:#fff;border:3px solid #f8a925;box-shadow:2px 3px 4px rgba(0,0,0,.35), inset 2px 2px 3px rgba(0,0,0,.25)"></div>
<div class="t" style="left:698.5px;top:101.18px;font-size:11.6px;color:#222;letter-spacing:-0.157px;">Assign TestCase :</div>
<div class="t" style="left:792.3px;top:101.18px;font-size:11.6px;color:#222;letter-spacing:-0.236px;font-weight:bold;">Cindy McCarthy</div>
<div class="t" style="left:1201.5px;top:99.89px;font-size:11px;color:#333;">x</div>
<svg style="left:0;top:0" width="1630" height="771" viewBox="0 0 1630 771"><circle cx="707.3" cy="129.6" r="4.6" fill="none" stroke="#2060a8" stroke-width="1.8"/><path d="M710.6 133 L716.2 138.3" stroke="#2060a8" stroke-width="2"/></svg>
<div class="a" style="left:724.2px;top:120.4px;width:490px;height:22.3px;border:1.4px solid #2b7cd6;background:#fff"></div>
<div class="a" style="left:727.4px;top:125px;width:1px;height:12.5px;background:#111"></div>
<div class="a" style="left:694.6px;top:148px;width:519.4px;height:19.8px;background:#e4f0fb"></div>
<svg style="left:0;top:0" width="1630" height="771" viewBox="0 0 1630 771"><path d="M718.73 154.80 A6.6 6.6 0 1 0 718.73 161.00" fill="none" stroke="#22b1c5" stroke-width="2.4"/><path d="M721.70 151.10 V157.70 H715.20 Z" fill="#22b1c5"/></svg>
<div class="t" style="left:735.3px;top:151.84px;font-size:12px;color:#222;letter-spacing:-0.111px;">Optional Products_3</div>
<div class="t" style="left:921px;top:151.84px;font-size:12px;color:#333;letter-spacing:-0.12px">/Import_import180914_0758/TestCases/.../Create Tru...</div>
<svg style="left:0;top:0" width="1630" height="771" viewBox="0 0 1630 771"><path d="M718.73 174.80 A6.6 6.6 0 1 0 718.73 181.00" fill="none" stroke="#22b1c5" stroke-width="2.4"/><path d="M721.70 171.10 V177.70 H715.20 Z" fill="#22b1c5"/></svg>
<div class="t" style="left:735.3px;top:171.84px;font-size:12px;color:#222;letter-spacing:-0.099px;">Euro Protection</div>
<div class="t" style="left:921px;top:171.84px;font-size:12px;color:#a2a2a2;letter-spacing:-0.12px">/Import_import180914_0758/TestCases/.../Create Tru...</div>
<svg style="left:0;top:0" width="1630" height="771" viewBox="0 0 1630 771"><path d="M718.73 194.80 A6.6 6.6 0 1 0 718.73 201.00" fill="none" stroke="#22b1c5" stroke-width="2.4"/><path d="M721.70 191.10 V197.70 H715.20 Z" fill="#22b1c5"/></svg>
<div class="t" style="left:735.3px;top:191.84px;font-size:12px;color:#222;letter-spacing:-0.292px;">Age between 18 an 25</div>
<div class="t" style="left:921px;top:191.84px;font-size:12px;color:#a2a2a2;letter-spacing:-0.12px">/Import_import180914_0758/TestCases/.../Create Ca...</div>
<svg style="left:0;top:0" width="1630" height="771" viewBox="0 0 1630 771"><path d="M718.73 214.80 A6.6 6.6 0 0 0 706.70 215.64" fill="none" stroke="#22b1c5" stroke-width="2.4"/><path d="M713.82 224.44 A6.6 6.6 0 0 0 718.73 221.00" fill="none" stroke="#22b1c5" stroke-width="2.4"/><path d="M721.70 211.10 V217.70 H715.20 Z" fill="#22b1c5"/><rect x="704" y="217.00" width="8.9" height="8.9" fill="#1f5fb0"/><path d="M705.9 219.70 H711 M708.45 219.70 V224.20" stroke="#fff" stroke-width="1.5"/></svg>
<div class="t" style="left:735.3px;top:211.84px;font-size:12px;color:#222;letter-spacing:-0.196px;">Create Camper Quote</div>
<div class="t" style="left:921px;top:211.84px;font-size:12px;color:#a2a2a2;letter-spacing:-0.12px">/Import_import180914_0758/TestCases/.../Create Ca...</div>
<svg style="left:0;top:0" width="1630" height="771" viewBox="0 0 1630 771"><path d="M718.73 234.80 A6.6 6.6 0 0 0 706.70 235.64" fill="none" stroke="#22b1c5" stroke-width="2.4"/><path d="M713.82 244.44 A6.6 6.6 0 0 0 718.73 241.00" fill="none" stroke="#22b1c5" stroke-width="2.4"/><path d="M721.70 231.10 V237.70 H715.20 Z" fill="#22b1c5"/><rect x="704" y="237.00" width="8.9" height="8.9" fill="#1f5fb0"/><path d="M705.9 239.70 H711 M708.45 239.70 V244.20" stroke="#fff" stroke-width="1.5"/></svg>
<div class="t" style="left:735.3px;top:231.84px;font-size:12px;color:#222;letter-spacing:-0.123px;">Create Truck Quote</div>
<div class="t" style="left:921px;top:231.84px;font-size:12px;color:#a2a2a2;letter-spacing:-0.12px">/Import_import180914_0758/TestCases/.../Create Tru...</div>
<svg style="left:0;top:0" width="1630" height="771" viewBox="0 0 1630 771"><path d="M718.73 254.80 A6.6 6.6 0 1 0 718.73 261.00" fill="none" stroke="#22b1c5" stroke-width="2.4"/><path d="M721.70 251.10 V257.70 H715.20 Z" fill="#22b1c5"/></svg>
<div class="t" style="left:735.3px;top:251.84px;font-size:12px;color:#222;letter-spacing:-0.111px;">Optional Products_3</div>
<div class="t" style="left:921px;top:251.84px;font-size:12px;color:#a2a2a2;letter-spacing:-0.12px">/Import_import180914_0804/TestCases/.../Create Tru...</div>
<svg style="left:0;top:0" width="1630" height="771" viewBox="0 0 1630 771"><path d="M718.73 274.80 A6.6 6.6 0 1 0 718.73 281.00" fill="none" stroke="#22b1c5" stroke-width="2.4"/><path d="M721.70 271.10 V277.70 H715.20 Z" fill="#22b1c5"/></svg>
<div class="t" style="left:735.3px;top:271.84px;font-size:12px;color:#222;letter-spacing:-0.099px;">Euro Protection</div>
<div class="t" style="left:921px;top:271.84px;font-size:12px;color:#a2a2a2;letter-spacing:-0.12px">/Import_import180914_0804/TestCases/.../Create Tru...</div>
<svg style="left:0;top:0" width="1630" height="771" viewBox="0 0 1630 771"><path d="M718.73 294.80 A6.6 6.6 0 1 0 718.73 301.00" fill="none" stroke="#22b1c5" stroke-width="2.4"/><path d="M721.70 291.10 V297.70 H715.20 Z" fill="#22b1c5"/></svg>
<div class="t" style="left:735.3px;top:291.84px;font-size:12px;color:#222;letter-spacing:-0.030px;">Create Motorcycle Quote</div>
<div class="t" style="left:921px;top:291.84px;font-size:12px;color:#a2a2a2;letter-spacing:0.045px;">/Import_import180914_0804/Tutorial/.../</div>
<svg style="left:0;top:0" width="1630" height="771" viewBox="0 0 1630 771"><path d="M718.73 314.80 A6.6 6.6 0 1 0 718.73 321.00" fill="none" stroke="#22b1c5" stroke-width="2.4"/><path d="M721.70 311.10 V317.70 H715.20 Z" fill="#22b1c5"/></svg>
<div class="t" style="left:735.3px;top:311.84px;font-size:12px;color:#222;letter-spacing:-0.292px;">Age between 18 an 25</div>
<div class="t" style="left:921px;top:311.84px;font-size:12px;color:#a2a2a2;letter-spacing:-0.12px">/Import_import180914_0804/TestCases/.../Create Ca...</div>
<svg style="left:0;top:0" width="1630" height="771" viewBox="0 0 1630 771"><path d="M718.73 334.80 A6.6 6.6 0 0 0 706.70 335.64" fill="none" stroke="#22b1c5" stroke-width="2.4"/><path d="M713.82 344.44 A6.6 6.6 0 0 0 718.73 341.00" fill="none" stroke="#22b1c5" stroke-width="2.4"/><path d="M721.70 331.10 V337.70 H715.20 Z" fill="#22b1c5"/><rect x="704" y="337.00" width="8.9" height="8.9" fill="#1f5fb0"/><path d="M705.9 339.70 H711 M708.45 339.70 V344.20" stroke="#fff" stroke-width="1.5"/></svg>
<div class="t" style="left:735.3px;top:331.84px;font-size:12px;color:#222;letter-spacing:-0.123px;">Create Truck Quote</div>
<div class="t" style="left:921px;top:331.84px;font-size:12px;color:#a2a2a2;letter-spacing:-0.12px">/Import_import180914_0804/TestCases/.../Create Tru...</div>
<svg style="left:0;top:0" width="1630" height="771" viewBox="0 0 1630 771"><path d="M718.73 354.80 A6.6 6.6 0 0 0 706.70 355.64" fill="none" stroke="#22b1c5" stroke-width="2.4"/><path d="M713.82 364.44 A6.6 6.6 0 0 0 718.73 361.00" fill="none" stroke="#22b1c5" stroke-width="2.4"/><path d="M721.70 351.10 V357.70 H715.20 Z" fill="#22b1c5"/><rect x="704" y="357.00" width="8.9" height="8.9" fill="#1f5fb0"/><path d="M705.9 359.70 H711 M708.45 359.70 V364.20" stroke="#fff" stroke-width="1.5"/></svg>
<div class="t" style="left:735.3px;top:351.84px;font-size:12px;color:#222;letter-spacing:-0.196px;">Create Camper Quote</div>
<div class="t" style="left:921px;top:351.84px;font-size:12px;color:#a2a2a2;letter-spacing:-0.12px">/Import_import180914_0804/TestCases/.../Create Ca...</div>
<svg style="left:0;top:0" width="1630" height="771" viewBox="0 0 1630 771"><path d="M718.73 374.80 A6.6 6.6 0 1 0 718.73 381.00" fill="none" stroke="#22b1c5" stroke-width="2.4"/><path d="M721.70 371.10 V377.70 H715.20 Z" fill="#22b1c5"/></svg>
<div class="t" style="left:735.3px;top:371.84px;font-size:12px;color:#222;letter-spacing:-0.292px;">Age between 18 an 25</div>
<div class="t" style="left:921px;top:371.84px;font-size:12px;color:#a2a2a2;letter-spacing:-0.12px">/Import_import180914_0809/TestCases/.../Create Ca...</div>
<svg style="left:0;top:0" width="1630" height="771" viewBox="0 0 1630 771"><path d="M718.73 394.80 A6.6 6.6 0 1 0 718.73 401.00" fill="none" stroke="#22b1c5" stroke-width="2.4"/><path d="M721.70 391.10 V397.70 H715.20 Z" fill="#22b1c5"/></svg>
<div class="t" style="left:735.3px;top:391.84px;font-size:12px;color:#222;letter-spacing:-0.111px;">Optional Products_3</div>
<div class="t" style="left:921px;top:391.84px;font-size:12px;color:#a2a2a2;letter-spacing:-0.12px">/Import_import180914_0809/TestCases/.../Create Tru...</div>
<svg style="left:0;top:0" width="1630" height="771" viewBox="0 0 1630 771"><path d="M718.73 414.80 A6.6 6.6 0 1 0 718.73 421.00" fill="none" stroke="#22b1c5" stroke-width="2.4"/><path d="M721.70 411.10 V417.70 H715.20 Z" fill="#22b1c5"/></svg>
<div class="t" style="left:735.3px;top:411.84px;font-size:12px;color:#222;letter-spacing:-0.030px;">Create Motorcycle Quote</div>
<div class="t" style="left:921px;top:411.84px;font-size:12px;color:#a2a2a2;letter-spacing:0.045px;">/Import_import180914_0809/Tutorial/.../</div>
<svg style="left:0;top:0" width="1630" height="771" viewBox="0 0 1630 771"><path d="M718.73 434.80 A6.6 6.6 0 1 0 718.73 441.00" fill="none" stroke="#22b1c5" stroke-width="2.4"/><path d="M721.70 431.10 V437.70 H715.20 Z" fill="#22b1c5"/></svg>
<div class="t" style="left:735.3px;top:431.84px;font-size:12px;color:#222;letter-spacing:-0.099px;">Euro Protection</div>
<div class="t" style="left:921px;top:431.84px;font-size:12px;color:#a2a2a2;letter-spacing:-0.12px">/Import_import180914_0809/TestCases/.../Create Tru...</div>
<svg style="left:0;top:0" width="1630" height="771" viewBox="0 0 1630 771"><path d="M718.73 454.80 A6.6 6.6 0 0 0 706.70 455.64" fill="none" stroke="#22b1c5" stroke-width="2.4"/><path d="M713.82 464.44 A6.6 6.6 0 0 0 718.73 461.00" fill="none" stroke="#22b1c5" stroke-width="2.4"/><path d="M721.70 451.10 V457.70 H715.20 Z" fill="#22b1c5"/><rect x="704" y="457.00" width="8.9" height="8.9" fill="#1f5fb0"/><path d="M705.9 459.70 H711 M708.45 459.70 V464.20" stroke="#fff" stroke-width="1.5"/></svg>
<div class="t" style="left:735.3px;top:451.84px;font-size:12px;color:#222;letter-spacing:-0.123px;">Create Truck Quote</div>
<div class="t" style="left:921px;top:451.84px;font-size:12px;color:#a2a2a2;letter-spacing:-0.12px">/Import_import180914_0809/TestCases/.../Create Tru...</div>
<svg style="left:0;top:0" width="1630" height="771" viewBox="0 0 1630 771"><path d="M718.73 474.80 A6.6 6.6 0 0 0 706.70 475.64" fill="none" stroke="#22b1c5" stroke-width="2.4"/><path d="M713.82 484.44 A6.6 6.6 0 0 0 718.73 481.00" fill="none" stroke="#22b1c5" stroke-width="2.4"/><path d="M721.70 471.10 V477.70 H715.20 Z" fill="#22b1c5"/><rect x="704" y="477.00" width="8.9" height="8.9" fill="#1f5fb0"/><path d="M705.9 479.70 H711 M708.45 479.70 V484.20" stroke="#fff" stroke-width="1.5"/></svg>
<div class="t" style="left:735.3px;top:471.84px;font-size:12px;color:#222;letter-spacing:-0.196px;">Create Camper Quote</div>
<div class="t" style="left:921px;top:471.84px;font-size:12px;color:#a2a2a2;letter-spacing:-0.12px">/Import_import180914_0809/TestCases/.../Create Ca...</div>
<svg style="left:0;top:0" width="1630" height="771" viewBox="0 0 1630 771"><path d="M718.73 494.80 A6.6 6.6 0 1 0 718.73 501.00" fill="none" stroke="#22b1c5" stroke-width="2.4"/><path d="M721.70 491.10 V497.70 H715.20 Z" fill="#22b1c5"/></svg>
<div class="t" style="left:735.3px;top:491.84px;font-size:12px;color:#222;letter-spacing:-0.111px;">Optional Products_3</div>
<div class="t" style="left:921px;top:491.84px;font-size:12px;color:#a2a2a2;letter-spacing:-0.12px">/Import_import180924_0940/TestCases/.../Create Tru...</div>
<svg style="left:0;top:0" width="1630" height="771" viewBox="0 0 1630 771"><path d="M718.73 514.80 A6.6 6.6 0 1 0 718.73 521.00" fill="none" stroke="#22b1c5" stroke-width="2.4"/><path d="M721.70 511.10 V517.70 H715.20 Z" fill="#22b1c5"/></svg>
<div class="t" style="left:735.3px;top:511.84px;font-size:12px;color:#222;letter-spacing:-0.030px;">Create Motorcycle Quote</div>
<div class="t" style="left:921px;top:511.84px;font-size:12px;color:#a2a2a2;letter-spacing:0.045px;">/Import_import180924_0940/Tutorial/.../</div>
<svg style="left:0;top:0" width="1630" height="771" viewBox="0 0 1630 771"><path d="M718.73 534.80 A6.6 6.6 0 1 0 718.73 541.00" fill="none" stroke="#22b1c5" stroke-width="2.4"/><path d="M721.70 531.10 V537.70 H715.20 Z" fill="#22b1c5"/></svg>
<div class="t" style="left:735.3px;top:531.84px;font-size:12px;color:#222;letter-spacing:-0.099px;">Euro Protection</div>
<div class="t" style="left:921px;top:531.84px;font-size:12px;color:#a2a2a2;letter-spacing:-0.12px">/Import_import180924_0940/TestCases/.../Create Tru...</div>
<svg style="left:0;top:0" width="1630" height="771" viewBox="0 0 1630 771"><path d="M718.73 554.80 A6.6 6.6 0 1 0 718.73 561.00" fill="none" stroke="#22b1c5" stroke-width="2.4"/><path d="M721.70 551.10 V557.70 H715.20 Z" fill="#22b1c5"/></svg>
<div class="t" style="left:735.3px;top:551.84px;font-size:12px;color:#222;letter-spacing:-0.292px;">Age between 18 an 25</div>
<div class="t" style="left:921px;top:551.84px;font-size:12px;color:#a2a2a2;letter-spacing:-0.12px">/Import_import180924_0940/TestCases/.../Create Ca...</div>
<svg style="left:0;top:0" width="1630" height="771" viewBox="0 0 1630 771"><path d="M718.73 574.80 A6.6 6.6 0 0 0 706.70 575.64" fill="none" stroke="#22b1c5" stroke-width="2.4"/><path d="M713.82 584.44 A6.6 6.6 0 0 0 718.73 581.00" fill="none" stroke="#22b1c5" stroke-width="2.4"/><path d="M721.70 571.10 V577.70 H715.20 Z" fill="#22b1c5"/><rect x="704" y="577.00" width="8.9" height="8.9" fill="#1f5fb0"/><path d="M705.9 579.70 H711 M708.45 579.70 V584.20" stroke="#fff" stroke-width="1.5"/></svg>
<div class="t" style="left:735.3px;top:571.84px;font-size:12px;color:#222;letter-spacing:-0.123px;">Create Truck Quote</div>
<div class="t" style="left:921px;top:571.84px;font-size:12px;color:#a2a2a2;letter-spacing:-0.12px">/Import_import180924_0940/TestCases/.../Create Tru...</div>
<svg style="left:0;top:0" width="1630" height="771" viewBox="0 0 1630 771"><path d="M718.73 594.80 A6.6 6.6 0 0 0 706.70 595.64" fill="none" stroke="#22b1c5" stroke-width="2.4"/><path d="M713.82 604.44 A6.6 6.6 0 0 0 718.73 601.00" fill="none" stroke="#22b1c5" stroke-width="2.4"/><path d="M721.70 591.10 V597.70 H715.20 Z" fill="#22b1c5"/><rect x="704" y="597.00" width="8.9" height="8.9" fill="#1f5fb0"/><path d="M705.9 599.70 H711 M708.45 599.70 V604.20" stroke="#fff" stroke-width="1.5"/></svg>
<div class="t" style="left:735.3px;top:591.84px;font-size:12px;color:#222;letter-spacing:-0.196px;">Create Camper Quote</div>
<div class="t" style="left:921px;top:591.84px;font-size:12px;color:#a2a2a2;letter-spacing:-0.12px">/Import_import180924_0940/TestCases/.../Create Ca...</div>
<svg style="left:0;top:0" width="1630" height="771" viewBox="0 0 1630 771"><path d="M718.73 614.80 A6.6 6.6 0 1 0 718.73 621.00" fill="none" stroke="#22b1c5" stroke-width="2.4"/><path d="M721.70 611.10 V617.70 H715.20 Z" fill="#22b1c5"/></svg>
<div class="t" style="left:735.3px;top:611.84px;font-size:12px;color:#222;letter-spacing:-0.030px;">Create Motorcycle Quote</div>
<div class="t" style="left:921px;top:611.84px;font-size:12px;color:#a2a2a2;letter-spacing:0.045px;">/Import_import180914_0758/Tutorial/.../</div>
</body></html>
